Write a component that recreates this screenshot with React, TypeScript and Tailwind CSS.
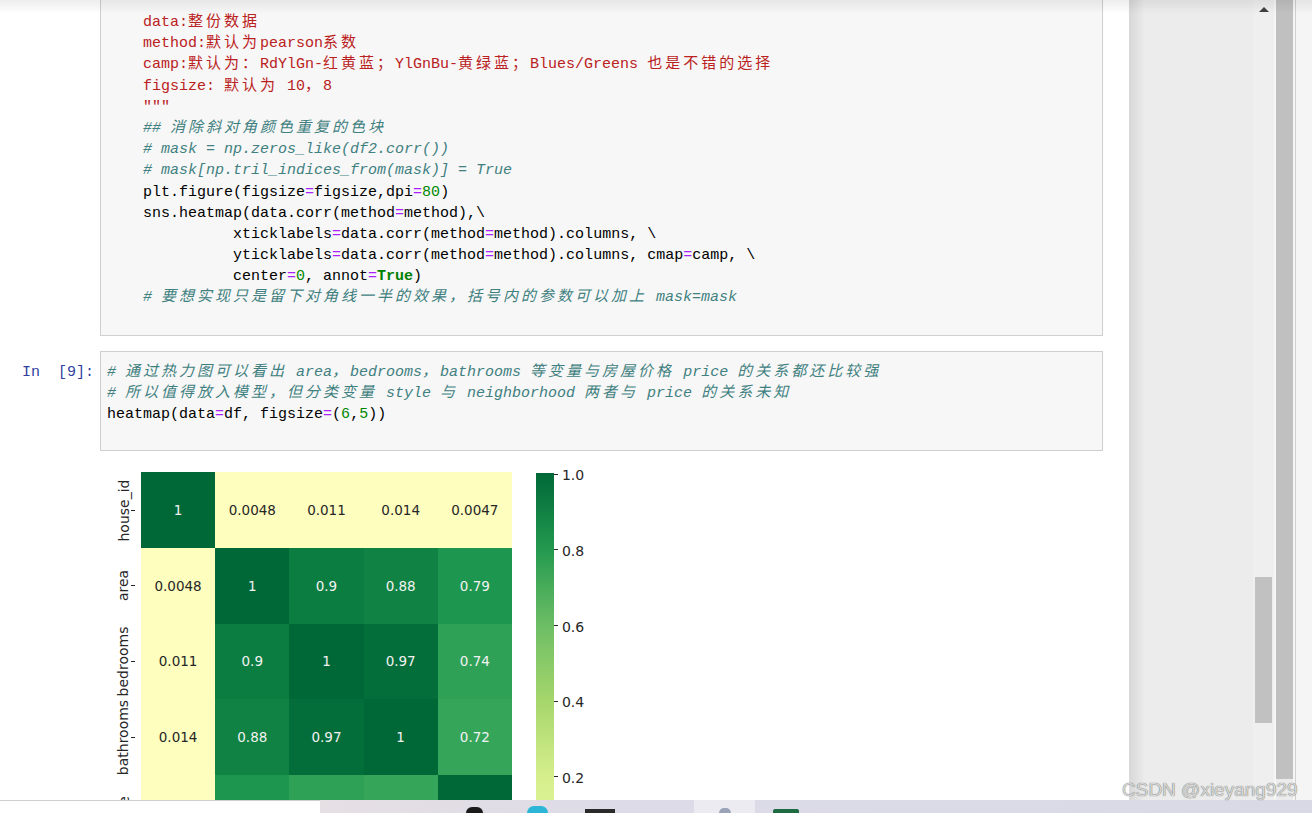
import React from 'react';

type Kind = 'n' | 's' | 'c' | 'o' | 'm' | 'k';
type Tok = [string, Kind];

const kindClass: Record<Kind, string> = {
  n: 'text-black',
  s: 'text-[#ba2121]',
  c: 'text-[#408080] italic',
  o: 'text-[#aa22ff]',
  m: 'text-[#008800]',
  k: 'text-[#008000] font-bold',
};

const CJK = /([\u3000-\u303f\u4e00-\u9fff\uff00-\uffef]+)/;

// latin glyphs are 9px wide, CJK glyphs take two columns (18px)
const Txt = ({ s }: { s: string }) => (
  <>
    {s.split(CJK).map((part, i) =>
      i % 2 === 1 ? (
        <span key={i} className="tracking-[3px]">
          {part}
        </span>
      ) : (
        part
      )
    )}
  </>
);

const CodeLine = ({ toks }: { toks: Tok[] }) => (
  <div className="h-[21.2px] leading-[21.2px] whitespace-pre">
    {toks.map(([t, k], i) => (
      <span key={i} className={kindClass[k]}>
        <Txt s={t} />
      </span>
    ))}
  </div>
);

const cell1: Tok[][] = [
  [['    data:整份数据', 's']],
  [['    method:默认为pearson系数', 's']],
  [['    camp:默认为：RdYlGn-红黄蓝；YlGnBu-黄绿蓝；Blues/Greens 也是不错的选择', 's']],
  [['    figsize: 默认为 10，8', 's']],
  [['    """', 's']],
  [['    ## 消除斜对角颜色重复的色块', 'c']],
  [['    # mask = np.zeros_like(df2.corr())', 'c']],
  [['    # mask[np.tril_indices_from(mask)] = True', 'c']],
  [['    plt.figure(figsize', 'n'], ['=', 'o'], ['figsize,dpi', 'n'], ['=', 'o'], ['80', 'm'], [')', 'n']],
  [['    sns.heatmap(data.corr(method', 'n'], ['=', 'o'], ['method),\\', 'n']],
  [['              xticklabels', 'n'], ['=', 'o'], ['data.corr(method', 'n'], ['=', 'o'], ['method).columns, \\', 'n']],
  [
    ['              yticklabels', 'n'], ['=', 'o'], ['data.corr(method', 'n'], ['=', 'o'],
    ['method).columns, cmap', 'n'], ['=', 'o'], ['camp, \\', 'n'],
  ],
  [['              center', 'n'], ['=', 'o'], ['0', 'm'], [', annot', 'n'], ['=', 'o'], ['True', 'k'], [')', 'n']],
  [['    # 要想实现只是留下对角线一半的效果，括号内的参数可以加上 mask=mask', 'c']],
];

const cell2: Tok[][] = [
  [['# 通过热力图可以看出 area，bedrooms，bathrooms 等变量与房屋价格 price 的关系都还比较强', 'c']],
  [['# 所以值得放入模型，但分类变量 style 与 neighborhood 两者与 price 的关系未知', 'c']],
  [['heatmap(data', 'n'], ['=', 'o'], ['df, figsize', 'n'], ['=', 'o'], ['(', 'n'], ['6', 'm'], [',', 'n'], ['5', 'm'], ['))', 'n']],
];

const labels = ['house_id', 'area', 'bedrooms', 'bathrooms', 'price'];
const values = [
  ['1', '0.0048', '0.011', '0.014', '0.0047'],
  ['0.0048', '1', '0.9', '0.88', '0.79'],
  ['0.011', '0.9', '1', '0.97', '0.74'],
  ['0.014', '0.88', '0.97', '1', '0.72'],
  ['0.0047', '0.79', '0.74', '0.72', '1'],
];

const tone: Record<string, string> = {
  '1': 'bg-[#006837] text-[#f2f2f2]',
  '0.97': 'bg-[#036e3a] text-[#f2f2f2]',
  '0.9': 'bg-[#0c7d41] text-[#f2f2f2]',
  '0.88': 'bg-[#108243] text-[#f2f2f2]',
  '0.79': 'bg-[#1d974f] text-[#f2f2f2]',
  '0.74': 'bg-[#2fa157] text-[#f2f2f2]',
  '0.72': 'bg-[#35a55a] text-[#f2f2f2]',
};

const ticks = ['1.0', '0.8', '0.6', '0.4', '0.2'];

const Heatmap = () => (
  <div className="mt-[21px] flex font-['DejaVu_Sans',sans-serif] text-[13.5px] text-[#262626]">
    <div className="flex w-[141px] flex-col">
      {labels.map((l) => (
        <div key={l} className="flex h-[75.75px] items-center justify-end pr-[6px]">
          <div className="flex w-[14px] justify-center">
            <span className="-rotate-90 whitespace-nowrap text-[14px]">{l}</span>
          </div>
          <div className="h-px w-[4px] bg-[#262626]" />
        </div>
      ))}
    </div>
    <div className="grid grid-cols-[repeat(5,74.2px)] auto-rows-[75.75px]">
      {values.flat().map((v, i) => (
        <div key={i} className={`flex items-center justify-center ${tone[v] ?? 'bg-[#fefebf] text-[#262626]'}`}>
          {v}
        </div>
      ))}
    </div>
    <div className="mt-[1px] ml-[24px] h-[380px] w-[18px] bg-[linear-gradient(to_bottom,#006837,#23994f_20%,#6cbe64_40%,#a6d66c_60%,#d6ef8c_80%,#e4f59e)]" />
    <div className="mt-[2px] flex flex-col">
      {ticks.map((t) => (
        <div key={t} className="relative h-[75.7px]">
          <div className="absolute top-0 left-0 flex -translate-y-1/2 items-center gap-[4px]">
            <div className="h-px w-[4px] bg-[#262626]" />
            <span className="translate-y-[1px] text-[14px] leading-none">{t}</span>
          </div>
        </div>
      ))}
    </div>
  </div>
);

const Taskbar = () => (
  <div className="absolute bottom-0 left-0 flex h-[13px] w-full">
    <div className="w-[320px] border-t border-[#cfcfcf] bg-white" />
    <div className="flex flex-1 items-start bg-[linear-gradient(to_right,#e6dfe4,#dcdbe7_30%,#d9d9e6)]">
      <div className="mt-[7px] ml-[146px] h-[6px] w-[17px] rounded-t-full bg-[#1a1a1a]" />
      <div className="mt-[6px] ml-[44px] h-[7px] w-[21px] rounded-t-full bg-[#2bb5d6]" />
      <div className="mt-[9px] ml-[37px] h-[4px] w-[30px] bg-[#2a2a2a]" />
      <div className="ml-[79px] flex h-full w-[61px] justify-center bg-[#ecebf1] pt-[8px]">
        <div className="h-[5px] w-[12px] rounded-t-full bg-[#9aa4b8]" />
      </div>
      <div className="mt-[9px] ml-[18px] h-[4px] w-[26px] rounded-t-[2px] bg-[#1d6b40]" />
    </div>
  </div>
);

export default function App() {
  return (
    <div className="relative flex h-[813px] w-[1312px] overflow-hidden bg-white">
      <div className="w-[1129px] shrink-0 font-['Liberation_Mono','Noto_Sans_CJK_SC',monospace] text-[15px]">
        <div className="ml-[100px] w-[1003px] border-x border-b border-[#cfcfcf] bg-[#f7f7f7] pt-[12px] pb-[26px] pl-[6px]">
          {cell1.map((l, i) => (
            <CodeLine key={i} toks={l} />
          ))}
        </div>
        <div className="mt-[15px] flex">
          <div className="w-[100px] pt-[11px] pr-[6px] text-right leading-[21.2px] whitespace-pre text-[#303f9f]">
            {'In\u00a0\u00a0[9]:'}
          </div>
          <div className="w-[1003px] border border-[#cfcfcf] bg-[#f7f7f7] pt-[10px] pb-[25px] pl-[6px]">
            {cell2.map((l, i) => (
              <CodeLine key={i} toks={l} />
            ))}
          </div>
        </div>
        <Heatmap />
      </div>

      <div className="w-[124px] shrink-0 bg-[linear-gradient(to_right,#d7d7d7,#ececec_16px)]" />
      <div className="flex w-[21px] shrink-0 flex-col items-center bg-[#efefef]">
        <div className="mt-[7px] h-0 w-0 border-x-[5px] border-b-[5px] border-x-transparent border-b-[#404040]" />
        <div className="mt-[565px] h-[146px] w-[17px] bg-[#c1c1c1]" />
      </div>
      <div className="w-[2px] shrink-0 bg-[#f6f6f6]" />
      <div className="w-[17px] shrink-0 bg-[#ececec]">
        <div className="h-[779px] bg-[#c0c0c0]" />
      </div>
      <div className="w-[2px] shrink-0 bg-[#f5f5f5]" />
      <div className="w-px shrink-0 bg-[#d0d0d0]" />
      <div className="flex-1 bg-[#f5f5f5]" />

      <div className="pointer-events-none absolute inset-x-0 top-0 h-[14px] bg-linear-to-b from-black/[0.07] to-transparent" />
      <Taskbar />
      <div className="absolute top-[779px] left-[1122px] font-['Liberation_Sans',sans-serif] text-[19px] leading-[22px] text-[#d6d6d6] [text-shadow:0_0_1px_rgba(0,0,0,0.7)]">
        CSDN @xieyang929
      </div>
    </div>
  );
}
